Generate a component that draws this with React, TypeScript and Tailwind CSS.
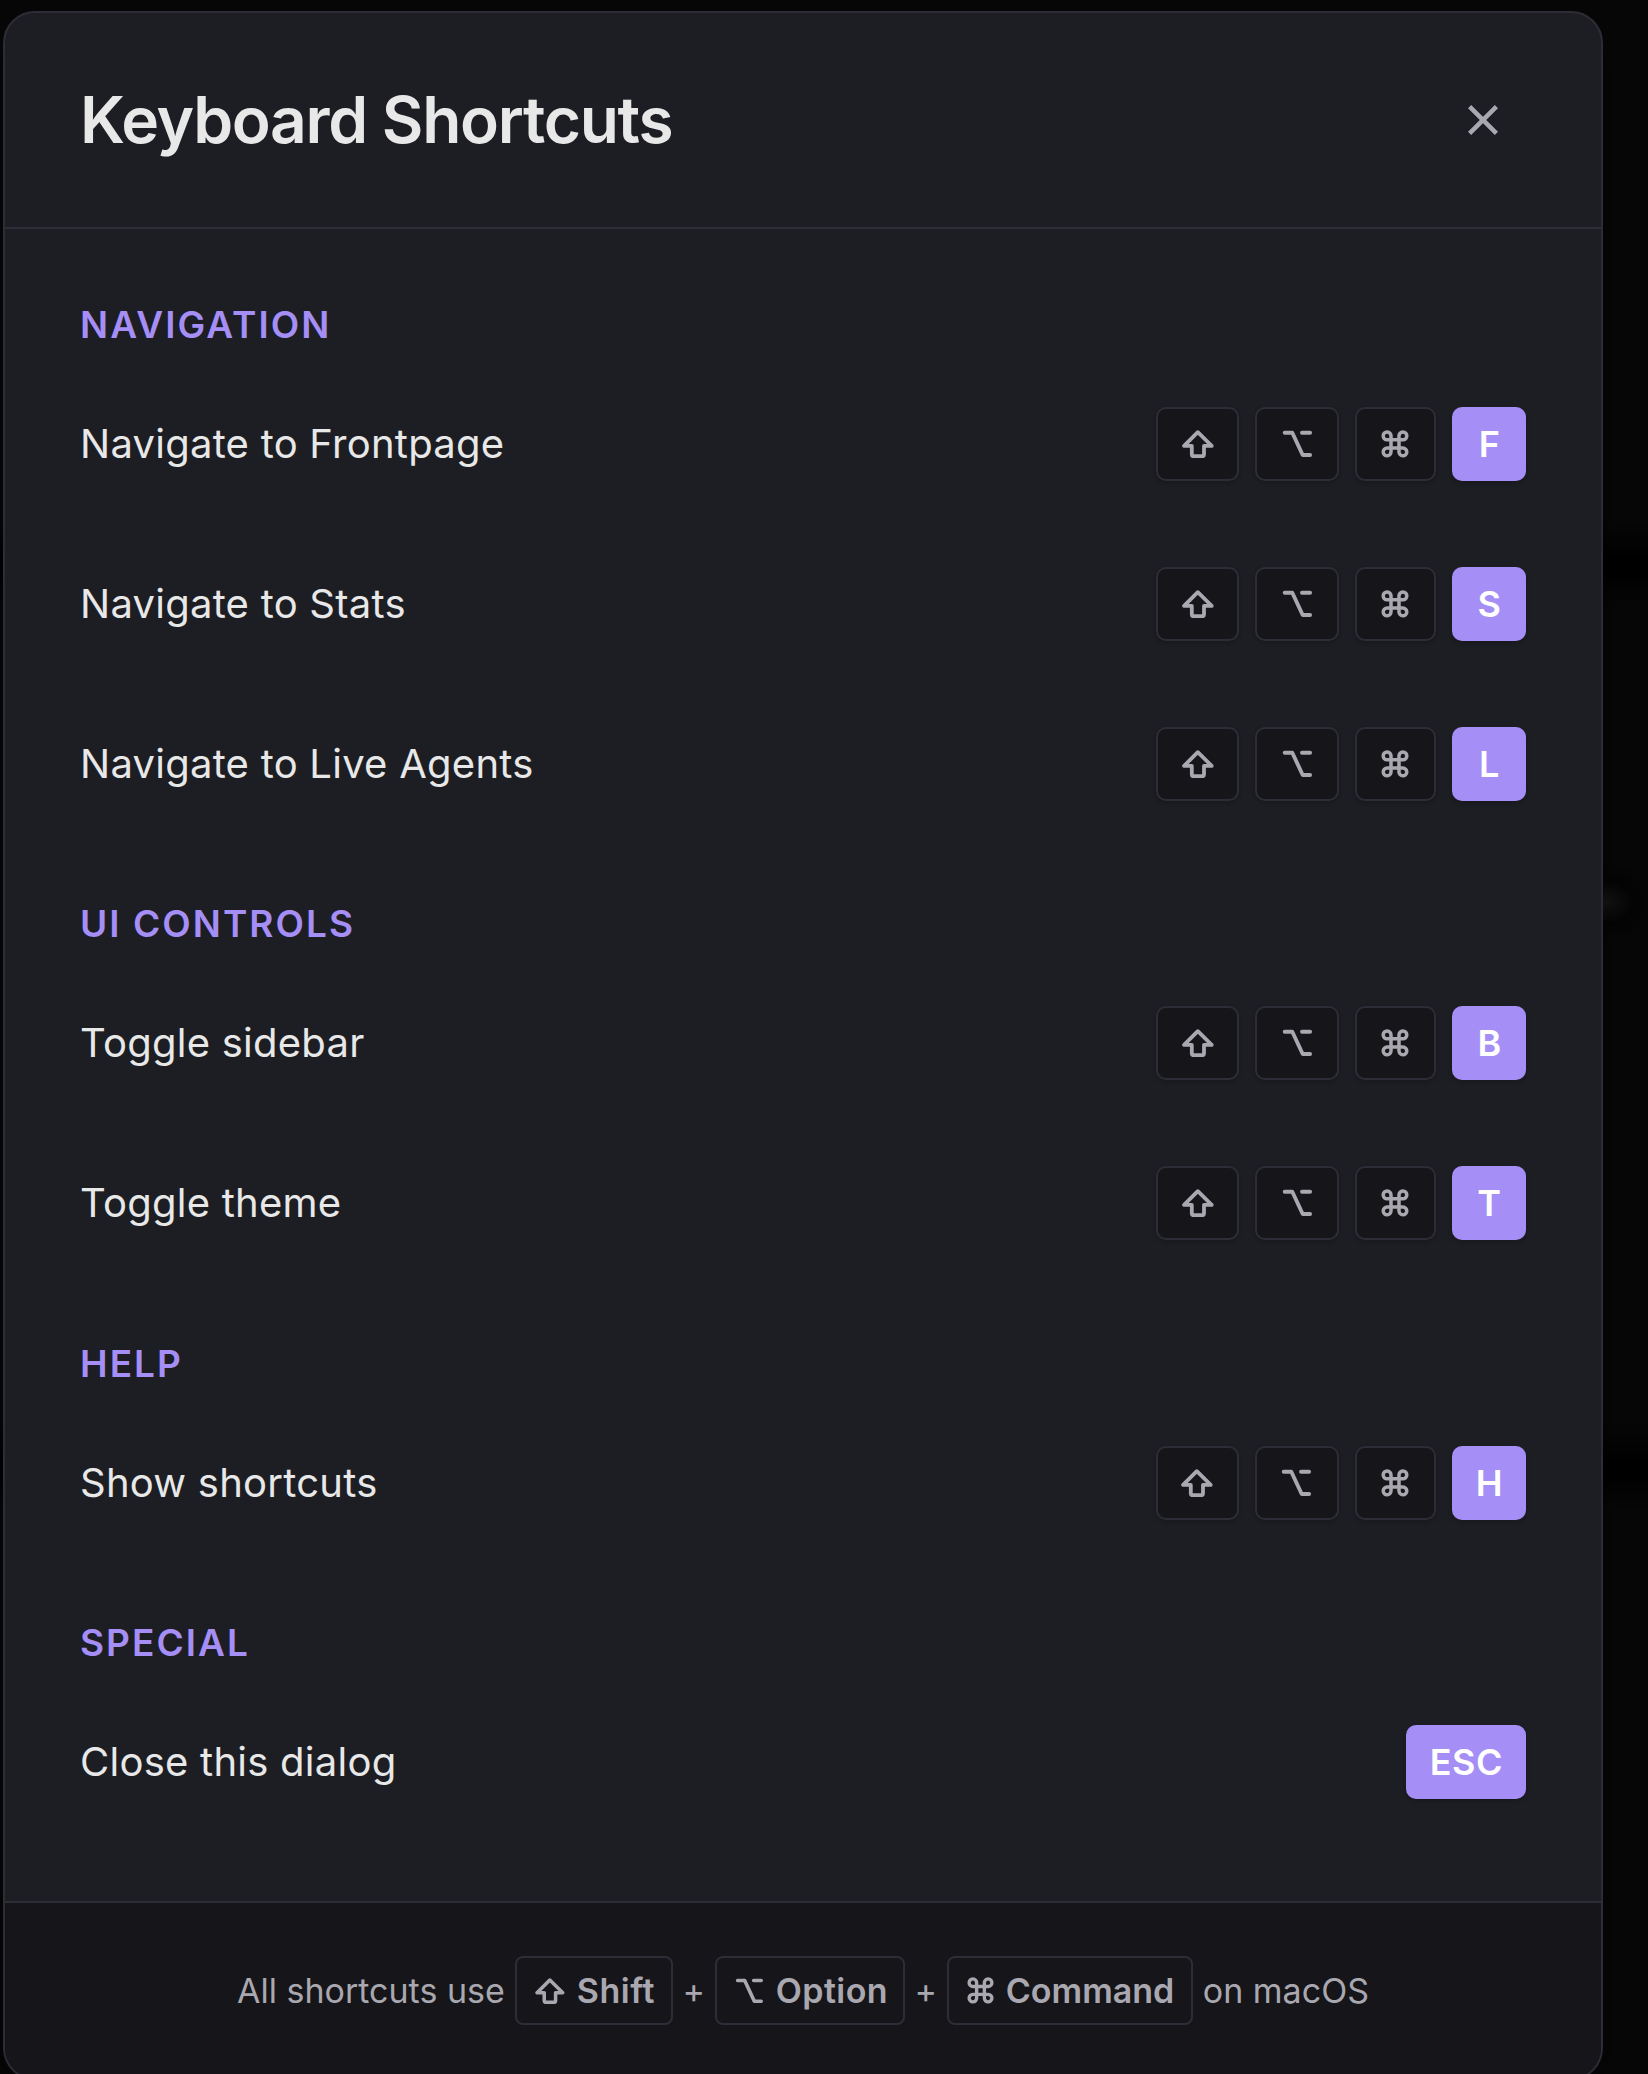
import type { ReactNode } from "react";

type Shortcut = { label: string; keyName: string; plain?: boolean };
type Section = { title: string; shortcuts: Shortcut[] };

const sections: Section[] = [
  {
    title: "Navigation",
    shortcuts: [
      { label: "Navigate to Frontpage", keyName: "F" },
      { label: "Navigate to Stats", keyName: "S" },
      { label: "Navigate to Live Agents", keyName: "L" },
    ],
  },
  {
    title: "UI Controls",
    shortcuts: [
      { label: "Toggle sidebar", keyName: "B" },
      { label: "Toggle theme", keyName: "T" },
    ],
  },
  { title: "Help", shortcuts: [{ label: "Show shortcuts", keyName: "H" }] },
  { title: "Special", shortcuts: [{ label: "Close this dialog", keyName: "ESC", plain: true }] },
];

function ShiftIcon({ className }: { className: string }) {
  return (
    <svg viewBox="0 0 32 28" className={className} fill="none" stroke="currentColor" strokeWidth="3.8" strokeLinejoin="round">
      <path d="M15.8 2.2 L2.1 15.9 H9.8 V24.6 Q9.8 26.2 11.4 26.2 H20.4 Q22 26.2 22 24.6 V15.9 H29.7 Z" />
    </svg>
  );
}

function OptionIcon({ className }: { className: string }) {
  return (
    <svg viewBox="0 0 31 28" className={className} fill="none" stroke="currentColor" strokeWidth="3.9" strokeLinejoin="round" strokeLinecap="round">
      <path d="M2.7 2.7 H10.3 L20.7 25 H28.1 M20 2.7 H28.1" />
    </svg>
  );
}

function CommandIcon({ className }: { className: string }) {
  return (
    <svg viewBox="0 0 28 28" className={className} fill="none" stroke="currentColor" strokeWidth="3.5">
      <path d="M10 9.8 H18 V18 H10 Z M10 9.8 V6 A3.9 3.9 0 1 0 6.1 9.8 H10 M18 9.8 H21.9 A3.9 3.9 0 1 0 18 6 V9.8 M18 18 V21.8 A3.9 3.9 0 1 0 21.9 18 H18 M10 18 H6.1 A3.9 3.9 0 1 0 10 21.8 V18" />
    </svg>
  );
}

function ModKey({ className, children }: { className: string; children: ReactNode }) {
  return (
    <kbd className={`flex h-[74px] items-center justify-center rounded-[10px] border-2 border-[#2d2c37] bg-[#161519] text-[#a9a8b0] shadow-[0_2px_4px_rgba(0,0,0,0.2)] ${className}`}>
      {children}
    </kbd>
  );
}

function ShortcutRow({ label, keyName, plain }: Shortcut) {
  return (
    <div className="flex h-[160px] items-center justify-between">
      <span className="text-[40px] leading-none tracking-[0.25px] text-[#e8e8e8]">{label}</span>
      <div className="flex items-center gap-4">
        {!plain && (
          <>
            <ModKey className="w-[83px]">
              <ShiftIcon className="h-7 w-8" />
            </ModKey>
            <ModKey className="w-[84px]">
              <OptionIcon className="h-7 w-[31px]" />
            </ModKey>
            <ModKey className="w-[81px] pr-px">
              <CommandIcon className="h-7 w-7" />
            </ModKey>
          </>
        )}
        <kbd className="flex h-[74px] min-w-[74px] items-center justify-center rounded-[10px] bg-[#a58ef5] pr-[23px] pl-6 font-['Inter'] text-[36px] leading-none font-semibold tracking-[0.5px] text-white shadow-[0_2px_4px_rgba(0,0,0,0.2)]">
          {keyName}
        </kbd>
      </div>
    </div>
  );
}

function HintKey({ className, icon, name }: { className: string; icon: ReactNode; name: string }) {
  return (
    <kbd className={`flex h-[69px] items-center rounded-[8px] border-2 border-[#2d2c37] bg-[#161519] pl-[18px] font-['Inter'] font-semibold ${className}`}>
      {icon}
      {name}
    </kbd>
  );
}

export default function App() {
  return (
    <div className="flex h-[2074px] w-[1648px] items-start overflow-hidden bg-[#070708] bg-[radial-gradient(ellipse_at_1604px_902px,#161616_0px,#0d0d0d_14px,#040404_30px,transparent_56px),linear-gradient(to_bottom,transparent_520px,#000_565px,transparent_610px,transparent_1420px,#000_1470px,transparent_1510px)] pt-[11px] pl-[3px] font-['Inter',sans-serif] antialiased">
      <div className="flex h-[2069px] w-[1600px] shrink-0 flex-col overflow-hidden rounded-[32px] border-2 border-[#2d2c37] bg-[#1d1e23] shadow-[0_20px_60px_rgba(0,0,0,0.4)]">
        <header className="flex h-[216px] shrink-0 items-center justify-between border-b-2 border-[#2d2c37] pr-[102px] pl-[75px]">
          <h2 className="text-[64px] leading-none font-semibold tracking-[-1.28px] text-[#e8e8e8]">Keyboard Shortcuts</h2>
          <button aria-label="Close" className="text-[#a9a8b0]">
            <svg viewBox="0 0 32 32" className="h-8 w-8" fill="none" stroke="currentColor" strokeWidth="4.5">
              <path d="M2.6 2.6 L29.4 29.4 M29.4 2.6 L2.6 29.4" />
            </svg>
          </button>
        </header>

        <main className="flex flex-1 flex-col gap-[60px] pt-[75.6px] pr-[75px] pl-[75px]">
          {sections.map((section) => (
            <section key={section.title}>
              <h3 className="mb-[19.4px] flex h-10 items-center text-[37px] leading-none font-semibold tracking-[2.05px] text-[#a58ef5] uppercase">
                {section.title}
              </h3>
              {section.shortcuts.map((s) => (
                <ShortcutRow key={s.label} {...s} />
              ))}
            </section>
          ))}
        </main>

        <footer className="flex h-[177px] shrink-0 items-center justify-center border-t-2 border-[#2d2c37] bg-[#161519] text-[34px] leading-none text-[#a9a8b0]">
          <span className="mr-[10px]">All shortcuts use</span>
          <HintKey className="w-[158px] tracking-[0.5px]" icon={<ShiftIcon className="mr-3 h-[26px] w-[30px]" />} name="Shift" />
          <span className="w-[42px] text-center">+</span>
          <HintKey className="w-[190px] tracking-[0.4px]" icon={<OptionIcon className="mr-3 h-[26px] w-[29px]" />} name="Option" />
          <span className="w-[42px] text-center">+</span>
          <HintKey className="w-[246px]" icon={<CommandIcon className="mr-3 h-[27px] w-[27px]" />} name="Command" />
          <span className="ml-[10px]">on macOS</span>
        </footer>
      </div>
    </div>
  );
}
